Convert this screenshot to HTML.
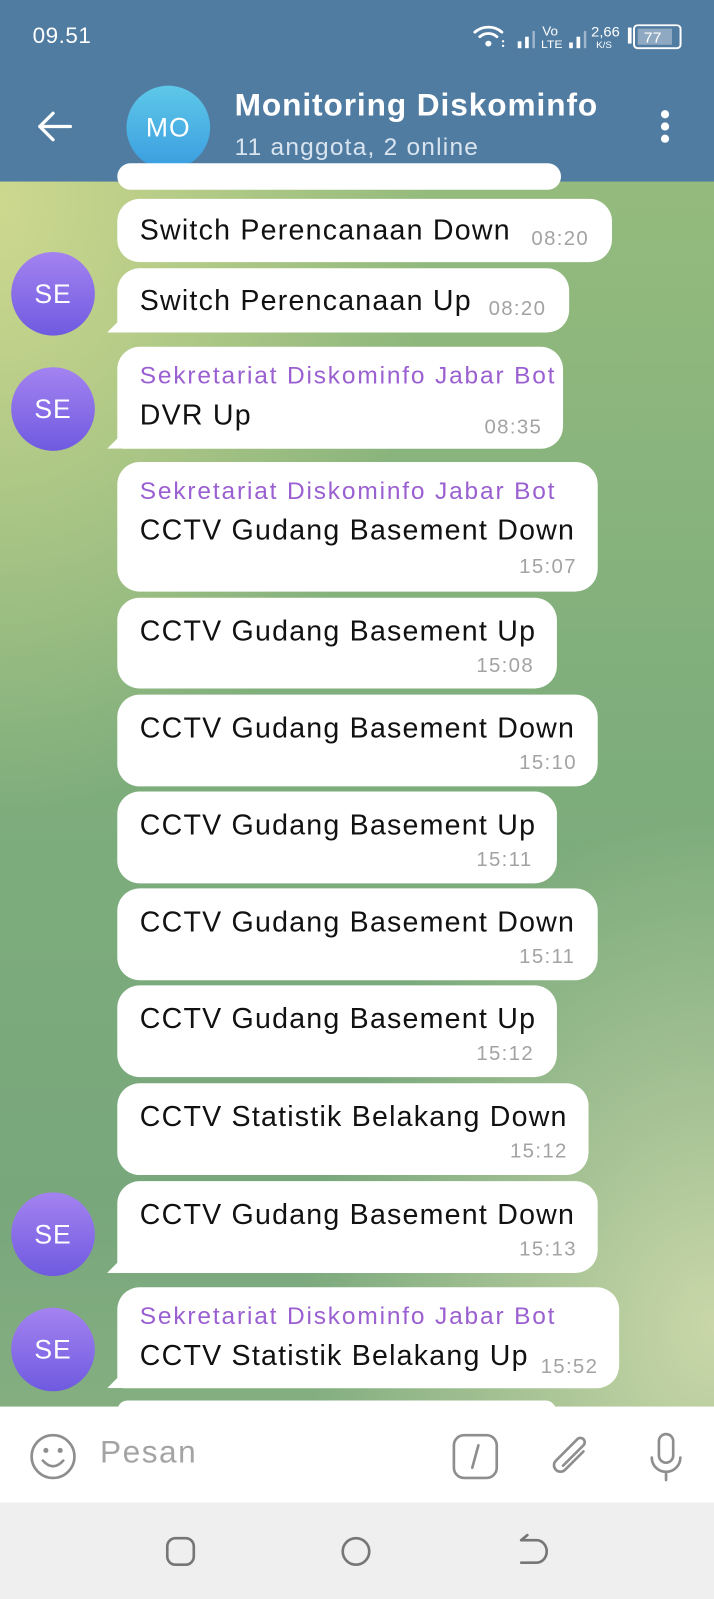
<!DOCTYPE html>
<html><head><meta charset="utf-8"><style>
html,body{margin:0;padding:0;width:714px;height:1599px;overflow:hidden;font-family:"Liberation Sans",sans-serif}
#w{position:absolute;left:0;top:0;width:700px;height:1568px;transform:scale(1.02);transform-origin:0 0;overflow:hidden;
background:radial-gradient(ellipse 420px 600px at 0px 200px,#cdd88e 0%,rgba(205,216,142,0) 100%),
radial-gradient(ellipse 400px 500px at 700px 1300px,#c9d7a8 0%,rgba(201,215,168,0) 100%),
linear-gradient(180deg,#9cbf7e 0%,#7fae7c 45%,#78a77c 75%,#8fb585 100%)}
.hdr{position:absolute;left:0;top:0;width:700px;height:178px;background:#517ca2}
.abs{position:absolute}
.b{position:absolute;left:115px;background:#fff;border-radius:22px;box-sizing:border-box}
.b.t{border-bottom-left-radius:6px}
.tx{position:absolute;left:22px;font-size:28px;color:#111;white-space:nowrap;letter-spacing:1.2px}
.tm{position:absolute;font-size:20px;color:#a3a3a3;white-space:nowrap;letter-spacing:1.3px}
.nm{position:absolute;left:22px;font-size:24px;color:#9a5fd0;white-space:nowrap;letter-spacing:1.8px}
.av{position:absolute;left:11px;width:82px;height:82px;border-radius:50%;background:linear-gradient(#a483f0,#6f5ae0);color:#fff;font-size:26px;text-align:center;line-height:82px;letter-spacing:1px}
.tail{position:absolute;left:-10px;bottom:0;width:20px;height:20px;background:#fff;clip-path:polygon(0 100%,100% 0,100% 100%)}
</style></head><body><div id="w">
<div class="hdr"></div>
<div class="abs" style="left:32px;top:22px;color:#fff;font-size:22px;letter-spacing:0.5px">09.51</div>
<svg class="abs" style="left:462px;top:18px" width="210" height="36" viewBox="0 0 175 32" preserveAspectRatio="none">
<g fill="none" stroke="#fff" stroke-width="2.4" stroke-linecap="round"><path d="M3 12 A16 16 0 0 1 25 12"/><path d="M7 16 A10 10 0 0 1 21 16"/></g>
<circle cx="14" cy="22" r="2.5" fill="#fff"/><circle cx="26" cy="20" r="1" fill="#fff"/><circle cx="26" cy="24" r="1" fill="#fff"/>
<rect x="38" y="20" width="3" height="6" fill="#fff"/><rect x="44" y="16" width="3" height="10" fill="#fff"/><rect x="50" y="11" width="2" height="15" fill="#9fb6cc"/>
<text x="58" y="15" font-size="11" fill="#fff" font-family="Liberation Sans">Vo</text><text x="57" y="26" font-size="10" fill="#fff" font-family="Liberation Sans">LTE</text>
<rect x="80" y="21" width="3" height="5" fill="#fff"/><rect x="86" y="16" width="3" height="10" fill="#fff"/><rect x="92" y="11" width="2" height="15" fill="#9fb6cc"/>
<text x="98" y="16" font-size="12" fill="#fff" font-family="Liberation Sans">2,66</text><text x="102" y="26" font-size="8" fill="#fff" font-family="Liberation Sans">K/S</text>
<rect x="128" y="8" width="3" height="14" fill="#fff"/>
<rect x="133" y="6" width="38" height="20" rx="3" fill="none" stroke="#fff" stroke-width="1.6"/>
<rect x="136" y="9" width="28" height="14" fill="#8fa9c2"/>
<text x="141" y="21" font-size="13" fill="#fff" font-family="Liberation Sans">77</text></svg>
<svg class="abs" style="left:36px;top:108px" width="36" height="32" viewBox="0 0 36 32"><g fill="none" stroke="#fff" stroke-width="3.2" stroke-linecap="round" stroke-linejoin="round"><path d="M3 16H33M16 3L3 16L16 29"/></g></svg>
<div class="abs" style="left:124px;top:84px;width:82px;height:82px;border-radius:50%;background:linear-gradient(#5ec8e8,#3a9de0);color:#fff;font-size:26px;text-align:center;line-height:82px;letter-spacing:1px">MO</div>
<div class="abs" style="left:230px;top:85px;color:#fff;font-size:31px;font-weight:bold;letter-spacing:0.9px">Monitoring Diskominfo</div>
<div class="abs" style="left:230px;top:131px;color:#d8e4ef;font-size:24px;letter-spacing:1.2px">11 anggota, 2 online</div>
<div class="abs" style="left:648px;top:108px;width:10px"><div style="width:8px;height:8px;border-radius:50%;background:#fff;margin:0 0 4px"></div><div style="width:8px;height:8px;border-radius:50%;background:#fff;margin:0 0 4px"></div><div style="width:8px;height:8px;border-radius:50%;background:#fff"></div></div>

<div class="b" style="top:160px;height:26px;width:435px"></div>
<div class="b" style="top:195px;height:62px;width:485px"><div class="tx" style="top:15px">Switch Perencanaan Down</div><div class="tm" style="left:406px;top:28px">08:20</div></div>
<div class="av" style="top:247px">SE</div>
<div class="b t" style="top:263px;height:63px;width:443px"><div class="tail"></div><div class="tx" style="top:16px">Switch Perencanaan Up</div><div class="tm" style="left:364px;top:29px">08:20</div></div>
<div class="av" style="top:360px">SE</div>
<div class="b t" style="top:340px;height:100px;width:437px"><div class="tail"></div><div class="nm" style="top:15px">Sekretariat Diskominfo Jabar Bot</div><div class="tx" style="top:51px">DVR Up</div><div class="tm" style="left:360px;top:68px">08:35</div></div>
<div class="b" style="top:453px;height:127px;width:471px"><div class="nm" style="top:15px">Sekretariat Diskominfo Jabar Bot</div><div class="tx" style="top:51px">CCTV Gudang Basement Down</div><div class="tm" style="left:394px;top:92px">15:07</div></div>
<div class="b" style="top:586px;height:89px;width:431px"><div class="tx" style="top:17px">CCTV Gudang Basement Up</div><div class="tm" style="left:352px;top:56px">15:08</div></div>
<div class="b" style="top:681px;height:90px;width:471px"><div class="tx" style="top:17px">CCTV Gudang Basement Down</div><div class="tm" style="left:394px;top:56px">15:10</div></div>
<div class="b" style="top:776px;height:90px;width:431px"><div class="tx" style="top:17px">CCTV Gudang Basement Up</div><div class="tm" style="left:352px;top:56px">15:11</div></div>
<div class="b" style="top:871px;height:90px;width:471px"><div class="tx" style="top:17px">CCTV Gudang Basement Down</div><div class="tm" style="left:394px;top:56px">15:11</div></div>
<div class="b" style="top:966px;height:90px;width:431px"><div class="tx" style="top:17px">CCTV Gudang Basement Up</div><div class="tm" style="left:352px;top:56px">15:12</div></div>
<div class="b" style="top:1062px;height:90px;width:462px"><div class="tx" style="top:17px">CCTV Statistik Belakang Down</div><div class="tm" style="left:385px;top:56px">15:12</div></div>
<div class="av" style="top:1169px">SE</div>
<div class="b t" style="top:1158px;height:90px;width:471px"><div class="tail"></div><div class="tx" style="top:17px">CCTV Gudang Basement Down</div><div class="tm" style="left:394px;top:56px">15:13</div></div>
<div class="av" style="top:1282px">SE</div>
<div class="b t" style="top:1262px;height:99px;width:492px"><div class="tail"></div><div class="nm" style="top:15px">Sekretariat Diskominfo Jabar Bot</div><div class="tx" style="top:51px">CCTV Statistik Belakang Up</div><div class="tm" style="left:415px;top:67px">15:52</div></div>
<div class="b" style="top:1373px;height:20px;width:430px"></div>

<div class="abs" style="left:0;top:1379px;width:700px;height:95px;background:#fff"></div>
<svg class="abs" style="left:28px;top:1405px" width="50" height="48" viewBox="0 0 50 48"><g fill="none" stroke="#8e8e8e" stroke-width="2.6" stroke-linecap="round"><circle cx="24" cy="23" r="21"/><path d="M14 27 Q24 38 34 27"/></g><circle cx="17" cy="17" r="2.5" fill="#8e8e8e"/><circle cx="31" cy="17" r="2.5" fill="#8e8e8e"/></svg>
<div class="abs" style="left:98px;top:1406px;font-size:31px;color:#a4a4a4;letter-spacing:1.5px">Pesan</div>
<svg class="abs" style="left:440px;top:1403px" width="180" height="50" viewBox="0 0 180 50"><g fill="none" stroke="#8e8e8e" stroke-width="2.6" stroke-linecap="round"><rect x="5" y="4" width="42" height="42" rx="10"/><path d="M29 14L23 36"/><path d="M132 20 L114 38 A6 6 0 0 1 105 29 L126 8 A4 4 0 0 1 132 14 L112 34"/></g></svg>
<svg class="abs" style="left:632px;top:1403px" width="44" height="52" viewBox="0 0 44 52"><g fill="none" stroke="#8e8e8e" stroke-width="2.6" stroke-linecap="round"><rect x="14" y="3" width="14" height="28" rx="7"/><path d="M7 26 A14 14 0 0 0 35 26M21 40V48"/></g></svg>
<div class="abs" style="left:0;top:1473px;width:700px;height:95px;background:#efefef"></div>
<svg class="abs" style="left:155px;top:1500px" width="400" height="40" viewBox="0 0 400 40"><g fill="none" stroke="#767676" stroke-width="2.6" stroke-linecap="round"><rect x="9" y="8" width="26" height="26" rx="8"/><ellipse cx="194" cy="21" rx="13" ry="13"/><path d="M371 10H356M356 10L362 5M371 10A10 11 0 0 1 371 32H356"/></g></svg>
</div></body></html>
